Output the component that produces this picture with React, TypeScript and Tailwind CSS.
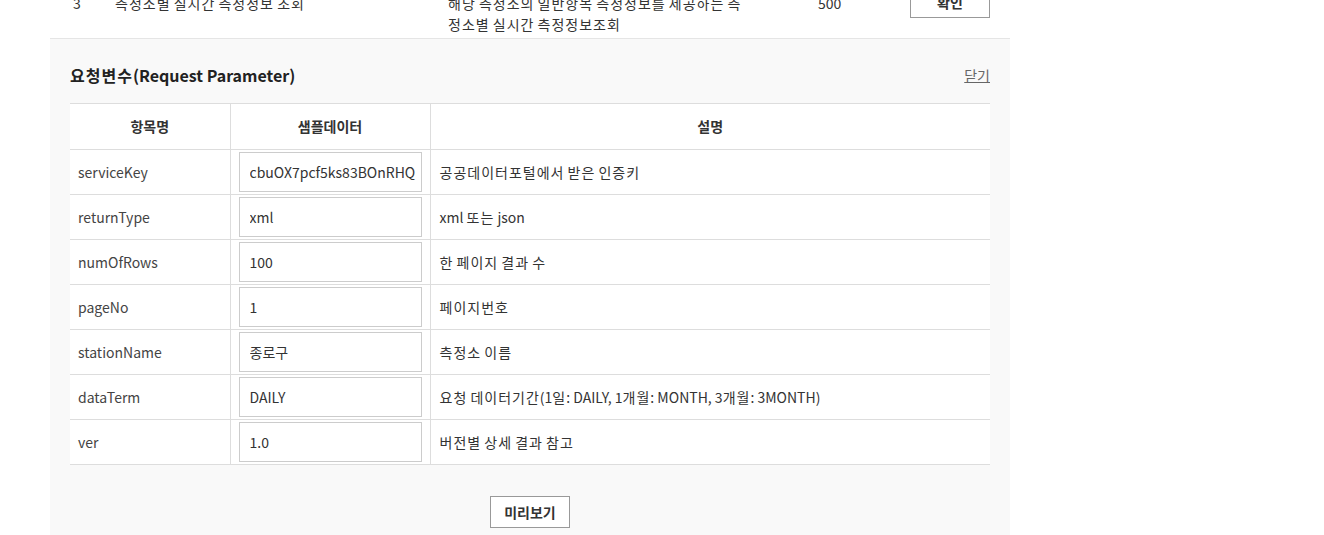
const params = [
  {name: 'serviceKey', sample: 'cbuOX7pcf5ks83BOnRHQ', desc: '공공데이터포털에서 받은 인증키'},
  {name: 'returnType', sample: 'xml', desc: 'xml 또는 json'},
  {name: 'numOfRows', sample: '100', desc: '한 페이지 결과 수'},
  {name: 'pageNo', sample: '1', desc: '페이지번호'},
  {name: 'stationName', sample: '종로구', desc: '측정소 이름'},
  {name: 'dataTerm', sample: 'DAILY', desc: '요청 데이터기간(1일: DAILY, 1개월: MONTH, 3개월: 3MONTH)'},
  {name: 'ver', sample: '1.0', desc: '버전별 상세 결과 참고'},
]

// hangul in the original font sits a bit wider than Noto CJK, so space the hangul runs out a little
const Ko = ({text}: {text: string}) => (
  <>
    {text.split(/([가-힣]+)/).map((s, i) =>
      /[가-힣]/.test(s) ? (
        <span key={i} className="tracking-[1px]">
          {s}
        </span>
      ) : (
        s
      ),
    )}
  </>
)

const OperationRow = () => (
  <div className="mt-[-7px] flex items-start border-b border-[#e5e5e5] pb-[3px] text-[14px] leading-[21px] text-[#333]">
    <div className="w-[65px] pl-[23px]">3</div>
    <div className="w-[333px]">
      <Ko text="측정소별 실시간 측정정보 조회" />
    </div>
    <div className="w-[370px]">
      <span className="block whitespace-nowrap">
        <Ko text="해당 측정소의 일반항목 측정정보를 제공하는 측" />
      </span>
      <span className="block whitespace-nowrap">
        <Ko text="정소별 실시간 측정정보조회" />
      </span>
    </div>
    <div className="w-[92px]">500</div>
    <div className="-mt-[7px]">
      <button className="h-[32px] w-[80px] border border-[#999] bg-white text-[14px] font-bold text-[#333]">
        확인
      </button>
    </div>
  </div>
)

const ParamRow = ({name, sample, desc}: {name: string; sample: string; desc: string}) => (
  <tr className="h-[45px] border-b border-[#ddd] bg-white">
    <td className="pl-[8px] text-[#444]">{name}</td>
    <td className="border-l border-[#ddd] px-[8px] py-[2px]">
      <input
        readOnly
        value={sample}
        className="block h-[40px] w-[183px] border border-[#ccc] bg-white pl-[10px] text-[14px] text-[#333] outline-none"
      />
    </td>
    <td className="border-l border-[#ddd] pl-[9px] text-[#333]">
      <Ko text={desc} />
    </td>
  </tr>
)

export default function App() {
  return (
    <div className="h-[535px] overflow-hidden bg-white font-['Noto_Sans_CJK_KR','Noto_Sans',sans-serif]">
      <div className="w-[960px] ml-[50px]">
        <OperationRow />
        <div className="bg-[#f9f9f9] px-[20px] pt-[25px] pb-[20px]">
          <div className="flex h-[22px] items-center justify-between">
            <h3 className="text-[16px] leading-[22px] font-bold text-[#222]">
              <Ko text="요청변수" />
              (Request Parameter)
            </h3>
            <a href="#" className="text-[14px] text-[#666] underline">
              닫기
            </a>
          </div>

          <table className="mt-[17px] w-full border-collapse text-[14px]">
            <colgroup>
              <col className="w-[160px]" />
              <col className="w-[200px]" />
              <col />
            </colgroup>
            <thead>
              <tr className="h-[46px] border-y border-[#ddd] bg-white text-[#333]">
                <th className="font-bold">항목명</th>
                <th className="border-l border-[#ddd] font-bold">샘플데이터</th>
                <th className="border-l border-[#ddd] font-bold">설명</th>
              </tr>
            </thead>
            <tbody>
              {params.map((p) => (
                <ParamRow key={p.name} {...p} />
              ))}
            </tbody>
          </table>

          <div className="mt-[31px] flex justify-center">
            <button className="h-[32px] w-[80px] border border-[#999] bg-white text-[14px] font-bold text-[#333]">
              미리보기
            </button>
          </div>
        </div>
      </div>
    </div>
  )
}
